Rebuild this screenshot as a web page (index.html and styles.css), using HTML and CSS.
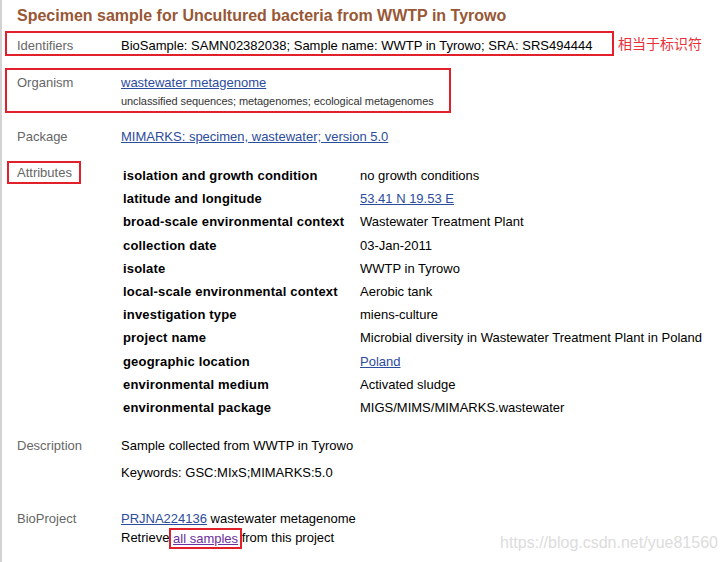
FILE: index.html
```html
<!DOCTYPE html>
<html>
<head>
<meta charset="utf-8">
<link rel="stylesheet" href="styles.css">
</head>
<body>
<div class="page">
  <h1 class="title">Specimen sample for Uncultured bacteria from WWTP in Tyrowo</h1>

  <div class="row ident mark">
    <div class="label">Identifiers</div>
    <div class="value">BioSample: SAMN02382038; Sample name: WWTP in Tyrowo; SRA: SRS494444</div>
  </div>

  <div class="row org mark">
    <div class="label">Organism</div>
    <div class="value">
      <div class="org-name"><a href="#">wastewater metagenome</a></div>
      <div class="lineage">unclassified sequences; metagenomes; ecological metagenomes</div>
    </div>
  </div>

  <div class="row pkg">
    <div class="label">Package</div>
    <div class="value"><a href="#">MIMARKS: specimen, wastewater; version 5.0</a></div>
  </div>

  <div class="row attrs">
    <div class="attr-label-col"><div class="label attr-label mark">Attributes</div></div>
    <table class="attr-table">
      <tr><th>isolation and growth condition</th><td>no growth conditions</td></tr>
      <tr><th>latitude and longitude</th><td><a href="#">53.41 N 19.53 E</a></td></tr>
      <tr><th>broad-scale environmental context</th><td>Wastewater Treatment Plant</td></tr>
      <tr><th>collection date</th><td>03-Jan-2011</td></tr>
      <tr><th>isolate</th><td>WWTP in Tyrowo</td></tr>
      <tr><th>local-scale environmental context</th><td>Aerobic tank</td></tr>
      <tr><th>investigation type</th><td>miens-culture</td></tr>
      <tr><th>project name</th><td>Microbial diversity in Wastewater Treatment Plant in Poland</td></tr>
      <tr><th>geographic location</th><td><a href="#">Poland</a></td></tr>
      <tr><th>environmental medium</th><td>Activated sludge</td></tr>
      <tr><th>environmental package</th><td>MIGS/MIMS/MIMARKS.wastewater</td></tr>
    </table>
  </div>

  <div class="row desc">
    <div class="label">Description</div>
    <div class="value">
      <p class="para">Sample collected from WWTP in Tyrowo</p>
      <p class="para kw">Keywords: GSC:MIxS;MIMARKS:5.0</p>
    </div>
  </div>

  <div class="row proj">
    <div class="label">BioProject</div>
    <div class="value">
      <div class="proj-line"><a href="#">PRJNA224136</a> wastewater metagenome</div>
      <div class="proj-line">Retrieve <span class="mark inline-mark"><a class="visited" href="#">all samples</a></span> from this project</div>
    </div>
  </div>

  <span class="note">相当于标识符</span>
  <span class="watermark">https://blog.csdn.net/yue81560</span>
</div>
</body>
</html>
```

FILE: styles.css
```css
html, body {
  margin: 0;
  padding: 0;
  background: #fff;
}

.page {
  position: relative;
  box-sizing: border-box;
  height: 562px;
  border-left: 2px solid #d2d2d2;
  font-family: "Liberation Sans", Arial, sans-serif;
  font-size: 13px;
  color: #000;
  overflow: hidden;
}

a {
  color: #2c4c9c;
  text-decoration: underline;
}

a.visited {
  color: #6b2f9e;
}

.title {
  margin: 0;
  padding-left: 15px;
  font-size: 16px;
  line-height: 31px;
  font-weight: bold;
  color: #985735;
}

.row {
  display: flex;
}

.label {
  flex: none;
  width: 104px;
  color: #666;
}

.mark {
  border: 2px solid #e2202b;
}

.ident {
  box-sizing: border-box;
  margin-left: 3px;
  width: 609px;
  height: 25px;
  padding: 3px 0 0 10px;
  line-height: 19px;
}

.org {
  box-sizing: border-box;
  margin-left: 3px;
  margin-top: 12px;
  width: 446px;
  height: 45px;
  padding: 3px 0 0 10px;
  line-height: 20px;
}

.org-name {
  line-height: 20px;
}

.lineage {
  margin-top: 1px;
  font-size: 11px;
  line-height: 14px;
  color: #333;
  letter-spacing: -0.08px;
}

.pkg {
  margin-top: 14px;
  padding-left: 15px;
  line-height: 20px;
}

.attrs {
  margin-top: 14px;
  padding-left: 5px;
  align-items: flex-start;
}

.attr-label-col {
  flex: none;
  width: 114px;
}

.attr-label {
  box-sizing: border-box;
  width: 74px;
  height: 23px;
  padding-left: 8px;
  line-height: 19px;
}

.attr-table {
  border-collapse: collapse;
  margin-top: 3px;
}

.attr-table th,
.attr-table td {
  padding: 0 2px;
  height: 23.2px;
  line-height: 17px;
  text-align: left;
  vertical-align: middle;
  white-space: nowrap;
}

.attr-table th {
  width: 233px;
  font-weight: bold;
  letter-spacing: 0.18px;
}

.desc {
  margin-top: 17px;
  padding-left: 15px;
}

.para {
  margin: 0;
  line-height: 20px;
}

.kw {
  margin-top: 7px;
}

.desc .label {
  line-height: 20px;
}

.proj {
  margin-top: 27px;
  padding-left: 15px;
}

.proj .label {
  line-height: 18px;
}

.proj-line {
  height: 18px;
  line-height: 18px;
}

.inline-mark {
  display: inline-block;
  padding: 0 2px;
  margin: 0 -4px;
  line-height: 17px;
  vertical-align: middle;
}

.note {
  position: absolute;
  left: 616px;
  top: 33px;
  font-family: "Noto Sans CJK SC", sans-serif;
  font-size: 14px;
  line-height: 20px;
  color: #e8303a;
}

.watermark {
  position: absolute;
  left: 498px;
  top: 532px;
  font-family: "Liberation Sans", Arial, sans-serif;
  font-size: 16px;
  line-height: 22px;
  color: #dcdcdc;
  white-space: nowrap;
}
```
